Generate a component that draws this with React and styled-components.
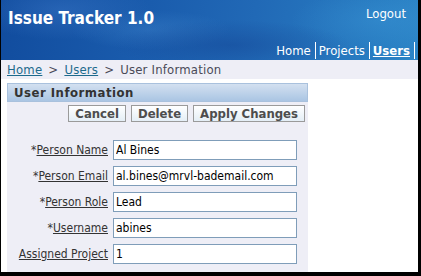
import styled, { createGlobalStyle } from "styled-components";

const Global = createGlobalStyle`
  html, body {
    margin: 0;
    padding: 0;
    background: #000;
  }
  body {
    font-family: "DejaVu Sans", "Liberation Sans", sans-serif;
    font-stretch: condensed;
  }
`;

const Frame = styled.div`
  width: 417px;
  height: 272px;
  margin-left: 1px;
  background: #fff;
  display: flex;
  flex-direction: column;
  overflow: hidden;
`;

const Header = styled.div`
  height: 60px;
  flex-shrink: 0;
  display: flex;
  justify-content: space-between;
  background:
    radial-gradient(ellipse 90px 30px at 60px 10px, rgba(60, 120, 200, 0.45), transparent),
    radial-gradient(ellipse 120px 25px at 230px 45px, rgba(20, 70, 150, 0.5), transparent),
    radial-gradient(ellipse 80px 20px at 150px 30px, rgba(70, 140, 210, 0.35), transparent),
    radial-gradient(ellipse 90px 30px at 380px 20px, rgba(60, 150, 215, 0.4), transparent),
    linear-gradient(100deg, #114c9e 0%, #1a5cad 35%, #2169b6 60%, #2b84c6 100%);
  color: #fff;
`;

const Title = styled.h1`
  margin: 0;
  padding: 8px 0 0 7px;
  font-size: 17px;
  font-weight: bold;
`;

const HeaderRight = styled.div`
  display: flex;
  flex-direction: column;
  align-items: flex-end;
  justify-content: space-between;
  padding: 6px 3px 1px 0;
`;

const Logout = styled.a`
  font-size: 13px;
  color: #fff;
  text-decoration: none;
  margin-right: 9px;
`;

const Nav = styled.div`
  display: flex;
  align-items: center;
  font-size: 13px;
`;

const NavLink = styled.a`
  color: #fff;
  padding: 0 4px 0 3px;
  text-decoration: ${(p) => (p.$active ? "underline" : "none")};
  font-weight: ${(p) => (p.$active ? "bold" : "normal")};
  border-right: 1px solid #fff;
  line-height: 17px;
  &:first-child {
    padding-left: 0;
  }
`;

const Crumbs = styled.div`
  height: 19px;
  flex-shrink: 0;
  background: #eeeef6;
  display: flex;
  align-items: center;
  padding-left: 6px;
  font-size: 13px;
  letter-spacing: 0.2px;
  color: #4a4a58;
  gap: 6px;
`;

const CrumbLink = styled.a`
  color: #1d6a8c;
  text-decoration: underline;
`;

const Body = styled.div`
  flex: 1;
  padding: 4px 0 0 6px;
  display: flex;
`;

const Panel = styled.section`
  width: 301px;
  background: #eeeef6;
  display: flex;
  flex-direction: column;
`;

const PanelHead = styled.h2`
  margin: 0;
  height: 17px;
  padding-left: 6px;
  display: flex;
  align-items: center;
  font-size: 13px;
  font-weight: bold;
  letter-spacing: 0.5px;
  color: #333;
  border: 1px solid #a9c1dd;
  background: linear-gradient(#d3e0f0, #aac5e3);
`;

const Buttons = styled.div`
  display: flex;
  justify-content: flex-end;
  gap: 5px;
  padding: 3px 3px 0 0;
`;

const Button = styled.button`
  height: 17px;
  padding: 0 6px;
  font-family: inherit;
  font-stretch: condensed;
  font-size: 13px;
  font-weight: bold;
  color: #4d4d4d;
  border: 1px solid #9a9a9a;
  background: linear-gradient(#ffffff, #e4eef6);
  line-height: 14px;
`;

const Form = styled.div`
  display: grid;
  grid-template-columns: 101px 184px;
  column-gap: 5px;
  row-gap: 6px;
  padding-top: 18px;
`;

const Label = styled.label`
  font-size: 12px;
  color: #333;
  text-align: right;
  align-self: center;
  white-space: nowrap;
`;

const Input = styled.input`
  box-sizing: border-box;
  height: 20px;
  width: 184px;
  margin: 0;
  padding: 0 2px;
  font-family: inherit;
  font-stretch: condensed;
  font-size: 12px;
  color: #000;
  border: 1px solid #7f9db9;
  background: #fff;
`;

const fields = [
  { label: "Person Name", value: "Al Bines", req: true },
  { label: "Person Email", value: "al.bines@mrvl-bademail.com", req: true },
  { label: "Person Role", value: "Lead", req: true },
  { label: "Username", value: "abines", req: true },
  { label: "Assigned Project", value: "1", req: false },
];

export default function App() {
  return (
    <Frame>
      <Global />
      <Header>
        <Title>Issue Tracker 1.0</Title>
        <HeaderRight>
          <Logout>Logout</Logout>
          <Nav>
            <NavLink>Home</NavLink>
            <NavLink>Projects</NavLink>
            <NavLink $active>Users</NavLink>
          </Nav>
        </HeaderRight>
      </Header>
      <Crumbs>
        <CrumbLink>Home</CrumbLink>
        <span>&gt;</span>
        <CrumbLink>Users</CrumbLink>
        <span>&gt;</span>
        <span>User Information</span>
      </Crumbs>
      <Body>
        <Panel>
          <PanelHead>User Information</PanelHead>
          <Buttons>
            <Button>Cancel</Button>
            <Button>Delete</Button>
            <Button>Apply Changes</Button>
          </Buttons>
          <Form>
            {fields.map((f) => (
              <>
                <Label key={f.label + "l"}>
                  {f.req && "*"}
                  <u>{f.label}</u>
                </Label>
                <Input key={f.label + "i"} defaultValue={f.value} />
              </>
            ))}
          </Form>
        </Panel>
      </Body>
    </Frame>
  );
}
